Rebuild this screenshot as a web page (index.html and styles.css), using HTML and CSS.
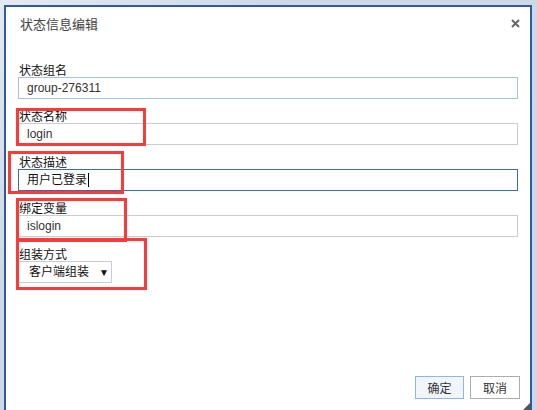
FILE: index.html
```html
<!DOCTYPE html>
<html lang="zh-CN">
<head>
    <meta charset="UTF-8">
    <title>状态信息编辑</title>
    <link rel="stylesheet" href="styles.css">
</head>
<body>
    <div class="dialog">
        <div class="dialog-header">
            <span class="dialog-title">状态信息编辑</span>
            <span class="close">
                <svg width="9" height="9" viewBox="0 0 9 9"><path d="M1 1L8 8M8 1L1 8" stroke="#666" stroke-width="2"/></svg>
            </span>
        </div>

        <form class="dialog-body">
            <div class="field">
                <label>状态组名</label>
                <div class="input input-blue">group-276311</div>
            </div>
            <div class="field">
                <label>状态名称</label>
                <div class="input">login</div>
            </div>
            <div class="field">
                <label>状态描述</label>
                <div class="input input-focus">用户已登录<span class="caret"></span></div>
            </div>
            <div class="field">
                <label>绑定变量</label>
                <div class="input">islogin</div>
            </div>
            <div class="field">
                <label>组装方式</label>
                <div class="select">客户端组装<span class="arrow">▼</span></div>
            </div>
        </form>

        <div class="dialog-footer">
            <button type="button" class="btn btn-primary">确定</button>
            <button type="button" class="btn">取消</button>
        </div>

        <!-- red annotation boxes -->
        <div class="mark mark-1"></div>
        <div class="mark mark-2"></div>
        <div class="mark mark-3"></div>
        <div class="mark mark-4"></div>

        <div class="grip"></div>
    </div>
</body>
</html>
```

FILE: styles.css
```css
body {
    margin: 0;
    background: linear-gradient(135deg, #e4e9f1 0%, #cfd8e6 30%);
    font-family: "Liberation Sans", Arial, "Noto Sans CJK SC", sans-serif;
    font-size: 12px;
    color: #222;
    overflow: hidden;
}
.dialog {
    position: relative;
    box-sizing: border-box;
    width: 528px;
    height: 412px;
    margin: 5px 0 0 4px;
    border: 2px solid #2f5b9e;
    background: #fff;
    display: flex;
    flex-direction: column;
}
.dialog-header {
    display: flex;
    justify-content: space-between;
    align-items: center;
    padding: 6px 10px 0 14px;
    height: 20px;
}
.dialog-title {
    font-size: 13px;
    color: #444;
}
.close {
    display: flex;
    margin-top: 1px;
}
.dialog-body {
    margin: 29px 0 0;
    padding: 0 10px 0 12px;
}
.field {
    margin-bottom: 9px;
}
.field label {
    display: block;
    height: 15px;
    line-height: 15px;
    padding-left: 1px;
    font-family: "Noto Sans CJK SC", sans-serif;
    color: #111;
}
.input {
    box-sizing: border-box;
    width: 500px;
    height: 22px;
    line-height: 20px;
    padding: 0 8px;
    border: 1px solid #c8cdd4;
    color: #333;
    overflow: hidden;
}
.input-blue {
    border-color: #a9c0df;
}
.input-focus {
    border-color: #3c6aae;
    color: #111;
}
.caret {
    display: inline-block;
    width: 1px;
    height: 14px;
    margin-left: 1px;
    background: #000;
    vertical-align: -3px;
}
.select {
    box-sizing: border-box;
    width: 94px;
    height: 22px;
    line-height: 20px;
    padding: 0 0 0 10px;
    border: 1px solid #c8cdd4;
    color: #111;
    overflow: hidden;
}
.arrow {
    font-size: 10px;
    margin-left: 10px;
}
.dialog-footer {
    margin-top: auto;
    display: flex;
    justify-content: flex-end;
    gap: 6px;
    padding: 0 10px 16px 0;
}
.btn {
    box-sizing: border-box;
    width: 50px;
    height: 23px;
    padding: 0;
    border: 1px solid #adadad;
    background: #fff;
    font-family: "Noto Sans CJK SC", sans-serif;
    font-size: 12px;
    color: #333;
}
.btn-primary {
    width: 49px;
    border-color: #8fb6ea;
    background: #f1f6fd;
}
.mark {
    position: absolute;
    box-sizing: border-box;
    border: 3px solid #fb3a3a;
}
.mark-1 { left: 10px;  top: 101px; width: 130px; height: 38px; }
.mark-2 { left: 2px;   top: 144px; width: 116px; height: 43px; }
.mark-3 { left: 10px;  top: 191px; width: 111px; height: 44px; }
.mark-4 { left: 10px;  top: 231px; width: 131px; height: 52px; }
.grip {
    position: absolute;
    right: 0;
    bottom: 1px;
    width: 0;
    height: 0;
    border-left: 11px solid transparent;
    border-bottom: 11px solid #555;
}
```
